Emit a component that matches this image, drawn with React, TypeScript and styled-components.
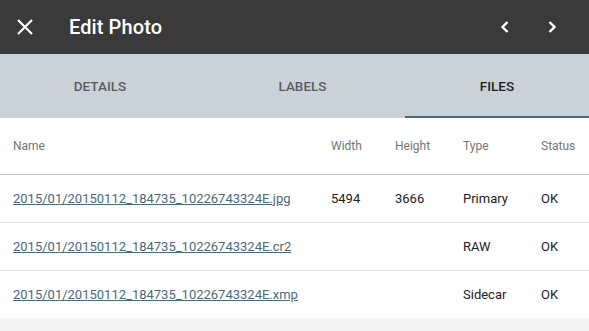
import React, { useState } from "react";
import styled, { createGlobalStyle } from "styled-components";

const GlobalStyle = createGlobalStyle`
  html, body {
    margin: 0;
    padding: 0;
    background: #f5f5f5;
    font-family: Roboto, "Liberation Sans", sans-serif;
  }
`;

const Page = styled.div`
  width: 589px;
  min-height: 331px;
  background: #f5f5f5;
  display: flex;
  flex-direction: column;
`;

const Toolbar = styled.header`
  height: 54px;
  background-color: #3a3a3a;
  display: flex;
  align-items: center;
  padding: 0 25px 0 13px;
  color: #fff;
`;

const IconButton = styled.button<{ $gap?: number }>`
  width: 24px;
  height: 24px;
  padding: 0;
  margin-right: ${(p) => p.$gap ?? 0}px;
  border: none;
  background: none;
  color: #fff;
  display: flex;
  align-items: center;
  justify-content: center;
  cursor: pointer;
`;

const Title = styled.h1`
  font-size: 20px;
  font-weight: 500;
  margin: 0 0 0 32px;
  letter-spacing: 0.1px;
  flex: 1;
`;

const Tabs = styled.nav`
  height: 64px;
  background-color: #c9d2d8;
  display: grid;
  grid-template-columns: 200px 205px 1fr;
`;

const Tab = styled.div<{ $active?: boolean }>`
  display: flex;
  align-items: center;
  justify-content: center;
  font-size: 13.5px;
  font-weight: 500;
  text-transform: uppercase;
  color: ${(p) => (p.$active ? "#1f1f1f" : "#5a5d60")};
  box-shadow: ${(p) => (p.$active ? "inset 0 -2px 0 #4b6978" : "none")};
  cursor: pointer;
`;

const Table = styled.table`
  width: 589px;
  border-collapse: collapse;
  table-layout: fixed;
  background: #fff;
`;

const HeadCell = styled.th<{ $w: number }>`
  width: ${(p) => p.$w}px;
  height: 56px;
  padding: 0 0 0 13px;
  text-align: left;
  font-size: 12px;
  font-weight: 400;
  color: #757575;
  border-bottom: 1px solid #c4c4c4;
  box-sizing: border-box;
`;

const Row = styled.tr`
  & + & td {
    border-top: 1px solid #e0e0e0;
  }
`;

const Cell = styled.td`
  height: 47px;
  padding: 0 0 0 13px;
  font-size: 13px;
  color: #222;
  white-space: nowrap;
`;

const FileLink = styled.a`
  color: #4c6a7a;
  text-decoration: underline;
  font-size: 13px;
`;

const CloseIcon = () => (
  <svg width="18" height="18" viewBox="0 0 18 18">
    <path d="M2 2 L16 16 M16 2 L2 16" stroke="#fff" strokeWidth="2.2" />
  </svg>
);

const Chevron = ({ dir }: { dir: "left" | "right" }) => (
  <svg width="12" height="14" viewBox="0 0 12 14">
    <path
      d={dir === "left" ? "M8.5 2 L3.5 7 L8.5 12" : "M3.5 2 L8.5 7 L3.5 12"}
      stroke="#fff"
      strokeWidth="2.4"
      fill="none"
    />
  </svg>
);

const columns = [
  { label: "Name", w: 318 },
  { label: "Width", w: 64 },
  { label: "Height", w: 68 },
  { label: "Type", w: 78 },
  { label: "Status", w: 61 },
];

const files = [
  { name: "2015/01/20150112_184735_10226743324E.jpg", width: "5494", height: "3666", type: "Primary", status: "OK" },
  { name: "2015/01/20150112_184735_10226743324E.cr2", width: "", height: "", type: "RAW", status: "OK" },
  { name: "2015/01/20150112_184735_10226743324E.xmp", width: "", height: "", type: "Sidecar", status: "OK" },
];

const App = () => {
  const [tab, setTab] = useState("files");

  return (
    <Page>
      <GlobalStyle />
      <Toolbar>
        <IconButton>
          <CloseIcon />
        </IconButton>
        <Title>Edit Photo</Title>
        <IconButton $gap={23}>
          <Chevron dir="left" />
        </IconButton>
        <IconButton>
          <Chevron dir="right" />
        </IconButton>
      </Toolbar>
      <Tabs>
        {["details", "labels", "files"].map((t) => (
          <Tab key={t} $active={tab === t} onClick={() => setTab(t)}>
            {t}
          </Tab>
        ))}
      </Tabs>
      <Table>
        <thead>
          <tr>
            {columns.map((c) => (
              <HeadCell key={c.label} $w={c.w}>
                {c.label}
              </HeadCell>
            ))}
          </tr>
        </thead>
        <tbody>
          {files.map((f) => (
            <Row key={f.name}>
              <Cell>
                <FileLink href="#">{f.name}</FileLink>
              </Cell>
              <Cell>{f.width}</Cell>
              <Cell>{f.height}</Cell>
              <Cell>{f.type}</Cell>
              <Cell>{f.status}</Cell>
            </Row>
          ))}
        </tbody>
      </Table>
    </Page>
  );
};

export default App;
